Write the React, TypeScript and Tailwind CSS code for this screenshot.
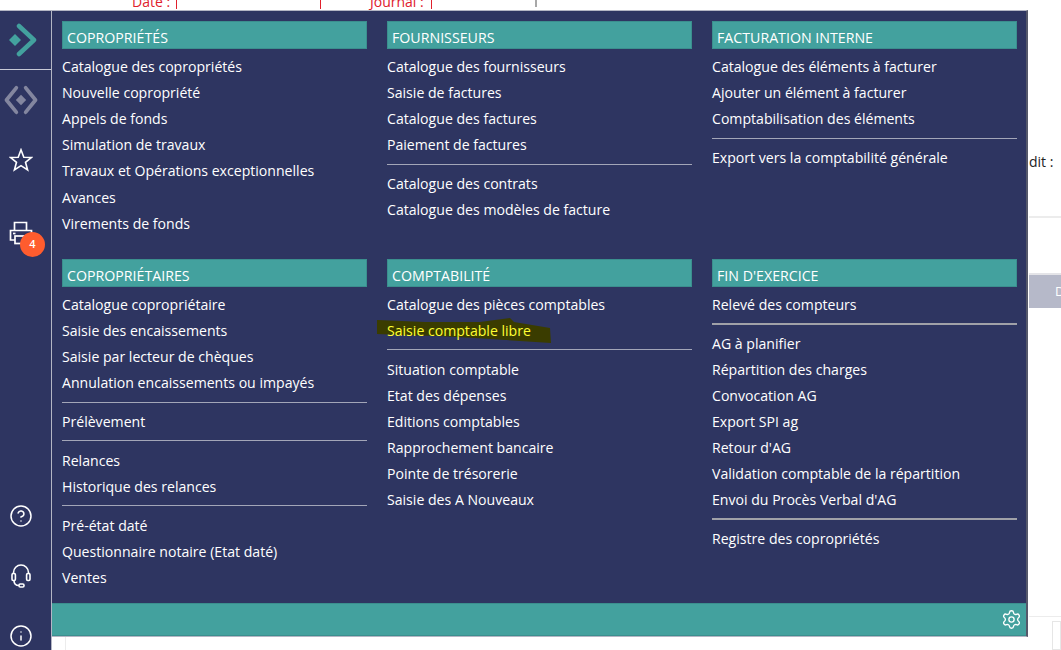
import { CircleHelp, Info, Settings } from "lucide-react";

type Entry = string | null;

const sections: { title: string; thick?: boolean; items: Entry[] }[][] = [
  [
    { title: "Copropriétés", items: ["Catalogue des copropriétés", "Nouvelle copropriété", "Appels de fonds", "Simulation de travaux", "Travaux et Opérations exceptionnelles", "Avances", "Virements de fonds"] },
    { title: "Copropriétaires", items: ["Catalogue copropriétaire", "Saisie des encaissements", "Saisie par lecteur de chèques", "Annulation encaissements ou impayés", null, "Prélèvement", null, "Relances", "Historique des relances", null, "Pré-état daté", "Questionnaire notaire (Etat daté)", "Ventes"] },
  ],
  [
    { title: "Fournisseurs", items: ["Catalogue des fournisseurs", "Saisie de factures", "Catalogue des factures", "Paiement de factures", null, "Catalogue des contrats", "Catalogue des modèles de facture"] },
    { title: "Comptabilité", items: ["Catalogue des pièces comptables", "Saisie comptable libre", null, "Situation comptable", "Etat des dépenses", "Editions comptables", "Rapprochement bancaire", "Pointe de trésorerie", "Saisie des A Nouveaux"] },
  ],
  [
    { title: "Facturation interne", items: ["Catalogue des éléments à facturer", "Ajouter un élément à facturer", "Comptabilisation des éléments", null, "Export vers la comptabilité générale"] },
    { title: "Fin d'exercice", thick: true, items: ["Relevé des compteurs", null, "AG à planifier", "Répartition des charges", "Convocation AG", "Export SPI ag", "Retour d'AG", "Validation comptable de la répartition", "Envoi du Procès Verbal d'AG", null, "Registre des copropriétés"] },
  ],
];

function Section({ title, thick, items }: { title: string; thick?: boolean; items: Entry[] }) {
  return (
    <div className="flex flex-col">
      <div className="flex h-[28px] items-end border border-[#3b8f8e] bg-[#43a19e] pb-[1px] pl-[4px] text-[14.2px] leading-[18px] font-medium text-white uppercase">
        {title}
      </div>
      <div className="pt-[4.4px]">
        {items.map((item, i) =>
          item === null ? (
            <div key={i} className="flex h-[12.6px] items-center">
              <div className={thick ? "h-[2px] w-full bg-[#a0a1a8]" : "h-px w-full bg-[#a3a6b8]"} />
            </div>
          ) : item === "Saisie comptable libre" ? (
            <div key={i} className="relative flex h-[26.15px] items-center text-[#ffff33]">
              <svg className="absolute top-[-1px] left-[-11px]" width="176" height="28" viewBox="0 0 176 28">
                <path d="M1 3 L49 5 L104 5 L134 1 L138 5 L174 11 L175 26 L99 21 L61 19 L24 18 L1 17 Z" fill="#3a3c00" />
              </svg>
              <span className="relative">{item}</span>
            </div>
          ) : (
            <div key={i} className="flex h-[26.15px] items-center">{item}</div>
          ),
        )}
      </div>
    </div>
  );
}

function Logo() {
  return (
    <svg width="30" height="34" viewBox="0 0 30 34" fill="none">
      <path d="M0 17 L6 11 L12 17 L6 23 Z" fill="#43a19e" />
      <path d="M10 3 L25 17 L10 31" stroke="#43a19e" strokeWidth="4.5" strokeLinecap="round" strokeLinejoin="round" />
    </svg>
  );
}

function GreyDiamond() {
  return (
    <svg width="34" height="30" viewBox="0 0 36 32" fill="none">
      <path d="M13 3 L2.5 16 L13 29" stroke="#83869f" strokeWidth="4" strokeLinecap="round" strokeLinejoin="round" />
      <path d="M23 3 L33.5 16 L23 29" stroke="#83869f" strokeWidth="4" strokeLinecap="round" strokeLinejoin="round" />
      <path d="M18 10.5 L23.5 16 L18 21.5 L12.5 16 Z" fill="#83869f" />
    </svg>
  );
}

function StarIcon() {
  return (
    <svg width="24" height="24" viewBox="0 0 24 24" fill="none" stroke="white" strokeWidth="1.6" strokeLinejoin="miter">
      <path d="M12 1.8 L14.8 9.2 L22.6 9.4 L16.5 14.3 L18.6 22 L12 17.6 L5.4 22 L7.5 14.3 L1.4 9.4 L9.2 9.2 Z" />
    </svg>
  );
}

function PrinterIcon() {
  return (
    <svg width="24" height="24" viewBox="0 0 24 24" fill="none" stroke="white" strokeWidth="1.7">
      <path d="M5.5 9 V1.5 H17.5 V9" />
      <path d="M6 19 H1.5 V9.5 H22.5 V19 H18" />
      <rect x="6" y="15" width="12" height="7.5" />
      <path d="M4 12.5 H6.5" />
    </svg>
  );
}

function Headset() {
  return (
    <svg width="20" height="24" viewBox="0 0 20 24" fill="none" stroke="white" strokeWidth="1.6">
      <path d="M2.5 10 V8.5 a7.5 7.5 0 0 1 15 0 V10" />
      <rect x="1" y="9.5" width="3.4" height="7" rx="1.2" />
      <rect x="15.6" y="9.5" width="3.4" height="7" rx="1.2" />
      <path d="M3 16.5 C3 20 5 21.5 8 21.5" />
      <rect x="8" y="20" width="5" height="3" rx="1.2" />
    </svg>
  );
}

export default function App() {
  return (
    <div className="relative h-[650px] w-[1061px] overflow-hidden bg-white font-['Open_Sans','Noto_Sans',sans-serif] text-[14.1px] text-white">
      {/* page behind the menu */}
      <div className="absolute top-[-9px] left-[132px] text-[14px] text-[#e0202c]">Date :</div>
      <div className="absolute top-[-9px] left-[370px] text-[14px] text-[#e0202c]">Journal :</div>
      <div className="absolute top-0 left-[176px] h-[9px] w-px bg-[#e0202c]" />
      <div className="absolute top-0 left-[320px] h-[9px] w-px bg-[#e0202c]" />
      <div className="absolute top-0 left-[431px] h-[9px] w-px bg-[#e0202c]" />
      <div className="absolute top-0 left-[535px] h-[7px] w-[2px] bg-[#a8a8a8]" />
      <div className="absolute top-[152px] left-[1029px] text-[14px] leading-[20px] text-[#222]">dit :</div>
      <div className="absolute top-[216px] left-[1029px] h-[2px] w-[32px] bg-[#ececec]" />
      <div className="absolute top-[273px] left-[1029px] flex h-[35px] w-[32px] border-t-2 border-[#e4e4e8] bg-[#b6b9c9]">
        <div className="ml-[20px] w-px bg-[#d5d7df]" />
        <span className="ml-[6px] pt-[7px] text-[13px] leading-[18px] text-white">D</span>
      </div>
      <div className="absolute top-[616px] left-[1029px] h-px w-[32px] bg-[#ececec]" />
      <div className="absolute top-[621px] left-[1052px] h-[29px] w-[9px] border border-[#e6e6e6]" />
      <div className="absolute top-[636px] left-[65px] h-[14px] w-px bg-[#ececec]" />

      {/* menu */}
      <div className="absolute inset-x-0 top-[10px] bottom-0 flex">
        <aside className="relative flex w-[52px] shrink-0 flex-col items-center border-t border-r border-[#b4b6c4] bg-[#2e3561] pr-[9px]">
          <div className="mr-[-9px] flex h-[59px] w-[51px] shrink-0 items-center justify-start border-b border-[#c8cad6] pl-[9px]">
            <Logo />
          </div>
          <div className="mt-[14px] flex h-[32px] shrink-0 items-center"><GreyDiamond /></div>
          <div className="mt-[32px] shrink-0"><StarIcon /></div>
          <div className="relative mt-[49px] shrink-0">
            <PrinterIcon />
            <span className="absolute top-[11px] left-[11px] flex h-[25px] w-[25px] items-center justify-center rounded-full bg-[#ff5c2e] text-[11px] font-semibold">4</span>
          </div>
          <CircleHelp className="mt-[259px] h-[24px] w-[24px] shrink-0" strokeWidth={1.5} />
          <div className="mt-[36px] shrink-0"><Headset /></div>
          <Info className="mt-[36px] h-[24px] w-[24px] shrink-0" strokeWidth={1.5} />
        </aside>

        <main className="flex h-[627px] w-[976px] flex-col border-t border-r-2 border-b border-[#b4b6c4] border-r-[#55586a] bg-[#2e3561]">
          <div className="grid h-[592px] grid-cols-[305px_305px_305px] gap-x-[20px] pt-[10px] pl-[10px]">
            {sections.map((col, i) => (
              <div key={i} className="flex flex-col">
                <div className="h-[238px]"><Section {...col[0]} /></div>
                <Section {...col[1]} />
              </div>
            ))}
          </div>
          <footer className="flex h-[33px] items-center justify-end border-t border-b border-[#3b8f8e] bg-[#43a19e] pr-[4px] pb-[1px]">
            <Settings className="h-[21px] w-[21px]" strokeWidth={1.5} />
          </footer>
        </main>
      </div>
    </div>
  );
}
